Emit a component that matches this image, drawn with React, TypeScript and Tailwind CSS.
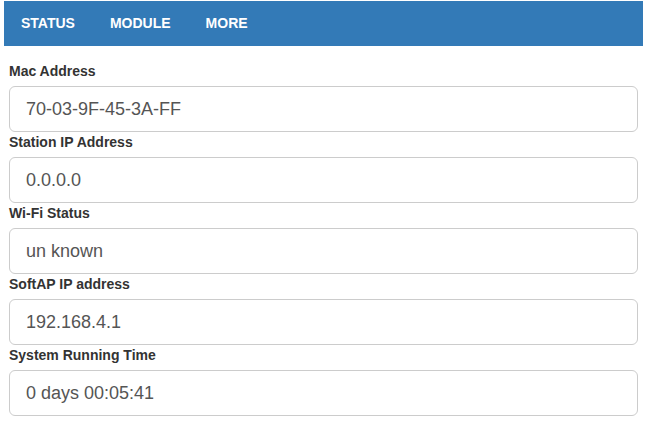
const fields = [
  { label: "Mac Address", value: "70-03-9F-45-3A-FF" },
  { label: "Station IP Address", value: "0.0.0.0" },
  { label: "Wi-Fi Status", value: "un known" },
  { label: "SoftAP IP address", value: "192.168.4.1" },
  { label: "System Running Time", value: "0 days 00:05:41" },
];

export default function App() {
  return (
    <div className="min-h-screen bg-white pt-px" style={{ fontFamily: '"Liberation Sans", Arial, sans-serif' }}>
      <nav className="ml-[4px] w-[639px] h-[45px] bg-[#337ab7] flex items-center pl-[17px] gap-[35px] text-[14px] font-bold text-white">
        <span>STATUS</span>
        <span>MODULE</span>
        <span>MORE</span>
      </nav>
      <div className="ml-[9px] w-[629px] pt-[15px]">
        {fields.map((f) => (
          <div key={f.label}>
            <label className="block mb-[5px] text-[14px] leading-[20px] font-bold text-[#333]">
              {f.label}
            </label>
            <div className="h-[46px] border border-[#ccc] rounded-[6px] px-[16px] flex items-center text-[18px] text-[#555]">
              {f.value}
            </div>
          </div>
        ))}
      </div>
    </div>
  );
}
